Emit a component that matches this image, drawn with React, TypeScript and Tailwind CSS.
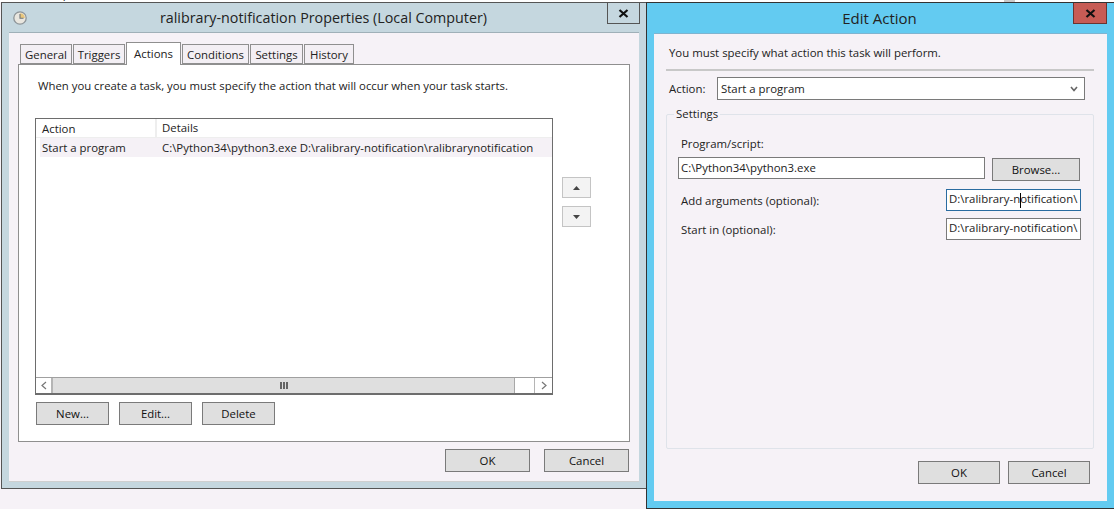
import React from 'react';

const font = { fontFamily: '"Open Sans", "Noto Sans", sans-serif' };

const Btn = ({ label, className = '' }: { label: string; className?: string }) => (
  <div className={`flex items-center justify-center bg-[#dfdfdf] border border-[#7a7a7a] text-[11.4px] text-[#111] ${className}`}>
    {label}
  </div>
);

const CloseGlyph = () => (
  <svg width="11" height="9" viewBox="0 0 11 9">
    <path d="M1.5 1 L9.5 8 M9.5 1 L1.5 8" stroke="#111" strokeWidth="2.2" fill="none" />
  </svg>
);

const ClockIcon = () => (
  <svg width="14" height="14" viewBox="0 0 14 14">
    <circle cx="7" cy="7" r="6.2" fill="#e9e6df" stroke="#8d9498" strokeWidth="1.3" />
    <path d="M7 7 V2.2 A4.8 4.8 0 0 1 11.8 7 Z" fill="#e8c67c" />
    <path d="M7 3 V7.3 H10.5" stroke="#6e7478" strokeWidth="1.1" fill="none" />
  </svg>
);

const tabs = ['General', 'Triggers', 'Actions', 'Conditions', 'Settings', 'History'];
const tabWidths = ['w-[52px]', 'w-[52px]', 'w-[55px]', 'w-[67px]', 'w-[53px]', 'w-[50px]'];

const TaskWindow = () => (
  <div className="absolute left-[1px] top-[2px] w-[646px] h-[487px] flex flex-col border border-[#555] bg-[#c5d7df]">
    <div className="relative h-[29px] shrink-0 flex items-center pl-[11px]">
      <ClockIcon />
      <div className="flex-1 text-center text-[14.3px] text-[#222] pr-[26px]">ralibrary-notification Properties (Local Computer)</div>
      <div className="absolute right-[6px] top-0 w-[33px] h-[21px] flex items-center justify-center border border-[#555] border-t-0">
        <CloseGlyph />
      </div>
    </div>
    <div className="mx-[7px] mb-[6px] flex-1 flex flex-col bg-[#f6f2f7] border-t border-[#9fb0b8] border-b border-b-[#cfcfcf] px-[9px] pt-[9px]">
      <div className="flex items-end gap-px h-[23px] relative z-10 -mb-px pl-[2px]">
        {tabs.map((t, i) =>
          t === 'Actions' ? (
            <div key={t} className={`${tabWidths[i]} h-[23px] bg-white border border-[#8f8f8f] border-b-0 flex items-center justify-center text-[11.4px] text-[#222]`}>{t}</div>
          ) : (
            <div key={t} className={`${tabWidths[i]} h-[20px] mb-px pt-[2px] bg-[#f3eff4] border border-[#8f8f8f] flex items-center justify-center text-[11.4px] text-[#222]`}>{t}</div>
          )
        )}
      </div>
      <div className="h-[378px] bg-white border border-[#8f8f8f] pl-[16px] flex flex-col">
        <div className="h-[43px] pt-[12px] pl-[3px] text-[11.35px] leading-[18px] text-[#222] whitespace-nowrap">When you create a task, you must specify the action that will occur when your task starts.</div>
        <div className="mt-[10px] flex">
          <div className="w-[518px] h-[277px] border border-[#6d6d6d] border-b-2 flex flex-col">
            <div className="h-[19px] flex items-center text-[11.4px] text-[#222] border-b border-[#eee] shrink-0">
              <div className="w-[121px] h-full pl-[6px] pt-px border-r-2 border-[#eee]">Action</div>
              <div className="pl-[5px]">Details</div>
            </div>
            <div className="h-[19px] flex items-center bg-[#f5f1f6] text-[11.4px] text-[#222] ml-[4px] shrink-0">
              <div className="w-[116px] pl-[2px]">Start a program</div>
              <div className="pl-[6px] whitespace-nowrap">C:\Python34\python3.exe D:\ralibrary-notification\ralibrarynotification</div>
            </div>
            <div className="flex-1" />
            <div className="h-[16px] flex items-stretch border-t border-[#a0a0a0] shrink-0">
              <div className="w-[17px] flex items-center justify-center border-r-2 border-[#b5b5b5]">
                <svg width="6" height="9" viewBox="0 0 6 9"><path d="M5 1 L1 4.5 L5 8" stroke="#777" strokeWidth="1.2" fill="none" /></svg>
              </div>
              <div className="w-[462px] bg-[#dfdfdf] border-r border-[#a8a8a8] flex items-center justify-center">
                <svg width="8" height="7" viewBox="0 0 8 7"><path d="M0 0h2v7H0zM3 0h2v7H3zM6 0h2v7H6z" fill="#666" /></svg>
              </div>
              <div className="w-[20px] border-r border-[#b5b5b5]" />
              <div className="flex-1 flex items-center justify-center">
                <svg width="6" height="9" viewBox="0 0 6 9"><path d="M1 1 L5 4.5 L1 8" stroke="#777" strokeWidth="1.2" fill="none" /></svg>
              </div>
            </div>
          </div>
          <div className="ml-[9px] mt-[59px] flex flex-col gap-[8px]">
            <div className="w-[29px] h-[21px] bg-[#f3f3f3] border border-[#c4c4c4] flex items-center justify-center">
              <svg width="7" height="4" viewBox="0 0 7 4"><path d="M3.5 0 L7 4 H0 Z" fill="#444" /></svg>
            </div>
            <div className="w-[29px] h-[21px] bg-[#f3f3f3] border border-[#c4c4c4] flex items-center justify-center">
              <svg width="7" height="4" viewBox="0 0 7 4"><path d="M0 0 H7 L3.5 4 Z" fill="#444" /></svg>
            </div>
          </div>
        </div>
        <div className="mt-[7px] ml-px flex gap-[10px]">
          <Btn label="New..." className="w-[73px] h-[23px]" />
          <Btn label="Edit..." className="w-[73px] h-[23px]" />
          <Btn label="Delete" className="w-[73px] h-[23px]" />
        </div>
      </div>
      <div className="mt-[7px] pr-px flex justify-end gap-[14px]">
        <Btn label="OK" className="w-[85px] h-[23px] border-[#3c78a8]" />
        <Btn label="Cancel" className="w-[85px] h-[23px]" />
      </div>
    </div>
  </div>
);

const EditWindow = () => (
  <div className="absolute left-[646px] top-[2px] w-[469px] h-[507px] flex flex-col border border-[#333] bg-[#63cbf1]">
    <div className="relative h-[30px] shrink-0 flex items-center justify-center pr-[2px]">
      <span className="text-[15px] text-[#222]">Edit Action</span>
      <div className="absolute right-[7px] top-0 w-[34px] h-[21px] flex items-center justify-center bg-[#c75c55] border border-[#6b3430] border-t-0">
        <CloseGlyph />
      </div>
    </div>
    <div className="mx-[7px] mb-[7px] flex-1 bg-[#f6f2f7] border-t border-[#7fb4d0] pl-[12px] pr-[13px] flex flex-col">
      <div className="pt-[10px] pl-[3px] h-[37px] text-[11.4px] leading-[18px] text-[#222] border-b-2 border-[#c8c8c8]">You must specify what action this task will perform.</div>
      <div className="mt-[6px] flex items-center h-[23px]">
        <div className="w-[51px] pl-[3px] pt-px text-[11.4px] text-[#222]">Action:</div>
        <div className="w-[368px] h-[23px] bg-white border border-[#7a7a7a] flex items-center pl-[3px] pr-[6px] text-[11.4px] text-[#222]">
          <span className="flex-1 pt-px">Start a program</span>
          <svg width="8" height="6" viewBox="0 0 8 6"><path d="M1 1 L4 4.5 L7 1" stroke="#666" strokeWidth="1.6" fill="none" /></svg>
        </div>
      </div>
      <div className="relative mt-[14px] h-[335px] border border-[#dfe3ea] rounded-[2px] pl-[11px] pr-[11px] flex flex-col">
        <span className="absolute left-[7px] -top-[10px] bg-[#f6f2f7] px-[2px] text-[11.4px] leading-[17px] text-[#222]">Settings</span>
        <div className="pt-[20px] pl-[3px] h-[42px] text-[11.4px] leading-[18px] text-[#222]">Program/script:</div>
        <div className="flex items-start gap-[7px]">
          <div className="w-[307px] h-[22px] bg-white border border-[#7a7a7a] pl-[2px] flex items-center text-[11.4px] text-[#222]">C:\Python34\python3.exe</div>
          <Btn label="Browse..." className="mt-px w-[88px] h-[23px]" />
        </div>
        <div className="mt-[8px] h-[22px] flex items-center">
          <div className="w-[268px] pl-[3px] pt-[2px] text-[11.4px] text-[#222]">Add arguments (optional):</div>
          <div className="relative w-[135px] h-[22px] bg-white border border-[#2a6ca0] pl-[2px] pb-[2px] flex items-center text-[11.4px] text-[#222] overflow-hidden whitespace-nowrap">
            D:\ralibrary-notification\
            <span className="absolute left-[73px] top-[3px] w-px h-[15px] bg-black" />
          </div>
        </div>
        <div className="mt-[7px] h-[22px] flex items-center">
          <div className="w-[268px] pl-[3px] pt-[2px] text-[11.4px] text-[#222]">Start in (optional):</div>
          <div className="w-[135px] h-[22px] bg-white border border-[#7a7a7a] pl-[2px] pb-[2px] flex items-center text-[11.4px] text-[#222] overflow-hidden whitespace-nowrap">D:\ralibrary-notification\</div>
        </div>
      </div>
      <div className="mt-[12px] pr-[4px] flex justify-end gap-[8px]">
        <Btn label="OK" className="w-[82px] h-[23px] border-[#3c78a8]" />
        <Btn label="Cancel" className="w-[82px] h-[23px]" />
      </div>
    </div>
  </div>
);

export default function App() {
  return (
    <div className="relative w-[1114px] h-[509px] overflow-hidden bg-[#f6f2f7]" style={font}>
      <div className="absolute left-0 top-0 w-full h-[2px] bg-white overflow-hidden">
        <span className="absolute left-[4px] -top-[14px] text-[11.4px] leading-[16px] text-[#222] whitespace-nowrap">Which computer is runs</span>
        <span className="absolute left-[930px] -top-[14px] text-[11.4px] leading-[16px] text-[#222] whitespace-nowrap">12/10/2017 4:4</span>
        <span className="absolute left-[1004px] top-0 w-[11px] h-[2px] bg-[#c9c9c9]" />
      </div>
      <TaskWindow />
      <EditWindow />
    </div>
  );
}
